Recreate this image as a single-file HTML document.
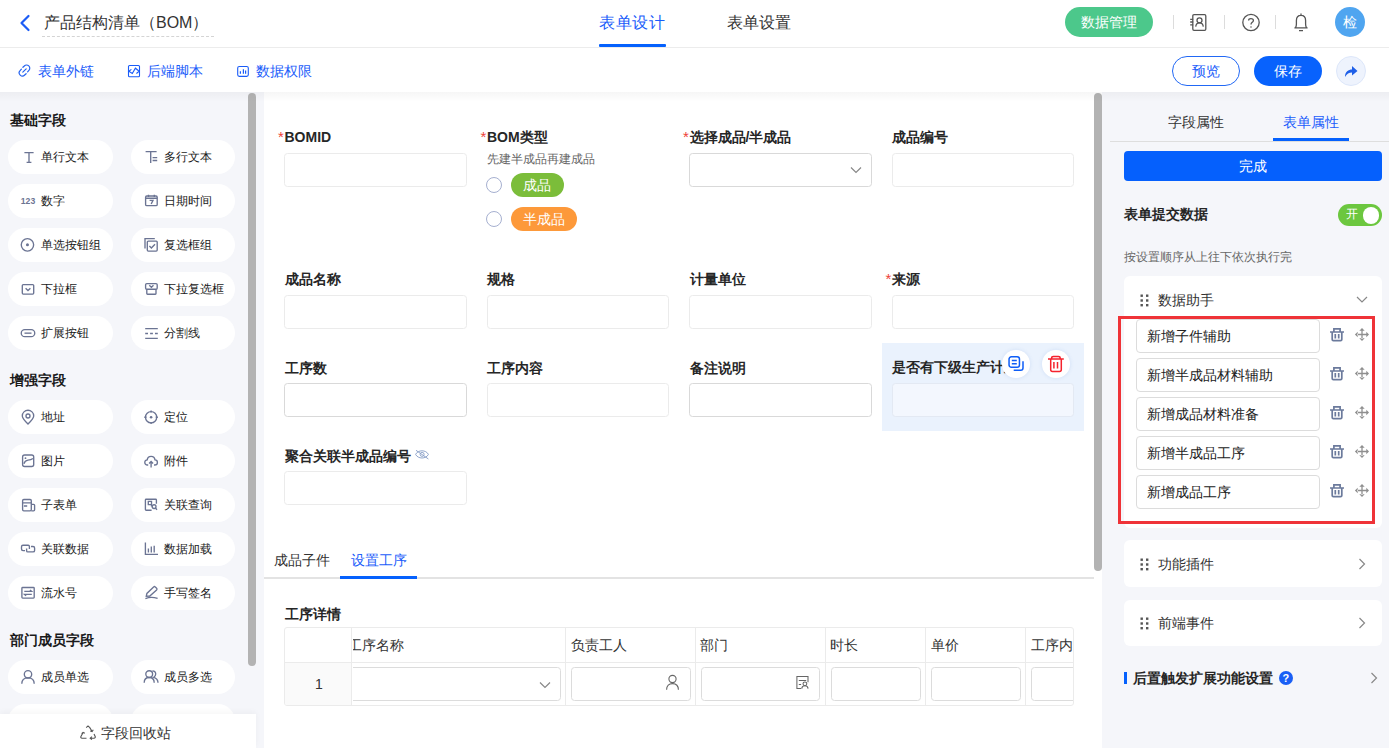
<!DOCTYPE html>
<html><head><meta charset="utf-8">
<style>
*{box-sizing:border-box;margin:0;padding:0}
html,body{width:1389px;height:748px;overflow:hidden;background:#f5f6fa;font-family:"Liberation Sans",sans-serif;color:#333}
.a{position:absolute}
.t{position:absolute;white-space:nowrap;line-height:1}
.f14{font-size:14px}.f12{font-size:12px}.f16{font-size:16px}
.b{font-weight:bold}
.blue{color:#1a5cfa}
#hdr{position:absolute;left:0;top:0;width:1389px;height:48px;background:#fff;border-bottom:1px solid #ececec}
#tb{position:absolute;left:0;top:48px;width:1389px;height:44px;background:#fff}
#lp{position:absolute;left:0;top:92px;width:256px;height:656px;background:#f5f6fa}
.pill{position:absolute;height:34px;background:#fff;border-radius:17px}
.pill.c1{left:8px;width:104.6px}.pill.c2{left:131px;width:104.4px}

.pill span{position:absolute;left:33px;top:11px;font-size:12px;line-height:12px;white-space:nowrap;color:#1a1a1a}
.pill.c2 span{left:33px}
#cv{position:absolute;left:264px;top:92px;width:838px;height:656px;background:#fff}
.sb{position:absolute;width:8px;background:#b3b3b3;border-radius:4px}
.lbl{position:absolute;font-size:14px;line-height:14px;font-weight:bold;color:#262626;white-space:nowrap}
.req{position:absolute;color:#ee4036;font-size:15px;line-height:15px;font-weight:normal}
.inp{position:absolute;height:34px;border:1px solid #ebebeb;border-radius:3.5px;background:#fff}
.inp.d{border-color:#d9d9d9}
#rp{position:absolute;left:1102px;top:92px;width:287px;height:656px;background:#f5f6fa}
.card{position:absolute;left:1124px;width:258px;background:#fff;border-radius:6px}
.rin{position:absolute;left:1136px;width:184px;height:34px;border:1px solid #dcdcdc;border-radius:4px;background:#fff}
.rin span{position:absolute;left:10px;top:9px;font-size:14px;line-height:14px;color:#222;white-space:nowrap}
</style></head><body>

<!-- HEADER -->
<div id="hdr"></div>
<svg class="a" style="left:18px;top:14px" width="14" height="18" viewBox="0 0 14 18"><path d="M10.5 2 L3.5 9 L10.5 16" fill="none" stroke="#1c5cf5" stroke-width="2.2" stroke-linecap="round" stroke-linejoin="round"/></svg>
<div class="t f16" style="left:44px;top:15px;color:#333">产品结构清单（BOM）</div>
<div class="a" style="left:42px;top:36px;width:172px;height:0;border-top:1px dashed #d4d4d4"></div>
<div class="t f16 blue" style="left:599px;top:15px;letter-spacing:0.6px">表单设计</div>
<div class="a" style="left:599px;top:44px;width:67px;height:3px;background:#0561fd;border-radius:1px"></div>
<div class="t f16" style="left:726.5px;top:15px;color:#333;letter-spacing:0.3px">表单设置</div>

<div class="a" style="left:1065px;top:7px;width:88px;height:30px;background:#4cc88b;border-radius:15px"></div>
<div class="t f14" style="left:1081px;top:14.5px;color:#fff">数据管理</div>
<div class="a" style="left:1173px;top:15px;width:1px;height:14px;background:#dcdcdc"></div>
<div class="a" style="left:1224px;top:15px;width:1px;height:14px;background:#dcdcdc"></div>
<div class="a" style="left:1275px;top:15px;width:1px;height:14px;background:#dcdcdc"></div>
<!-- contacts icon -->
<svg class="a" style="left:1189px;top:13px" width="19" height="19" viewBox="0 0 19 19" fill="none" stroke="#555" stroke-width="1.3"><rect x="3.8" y="1.7" width="13" height="15.6" rx="1.2"/><circle cx="10.5" cy="7.3" r="2.5"/><path d="M6.7 13.6 C7 11.2 8.4 9.9 10.5 9.9 C12.6 9.9 14 11.2 14.3 13.6"/><path d="M1.2 6.3h3M1.2 9h3M1.2 11.8h3"/></svg>
<!-- help icon -->
<svg class="a" style="left:1241px;top:13px" width="20" height="20" viewBox="0 0 20 20" fill="none" stroke="#555" stroke-width="1.3"><circle cx="10" cy="9.5" r="8.2"/><path d="M7.6 7.4 C7.6 5 12.4 5 12.4 7.4 C12.4 9.2 10 9.4 10 11.4"/><circle cx="10" cy="13.9" r="0.75" fill="#555" stroke="none"/></svg>
<!-- bell -->
<svg class="a" style="left:1292px;top:12px" width="18" height="20" viewBox="0 0 18 20" fill="none" stroke="#555" stroke-width="1.3"><path d="M9 1.6 V3.4 M3.6 15.6 C4.2 14.6 4.4 13.6 4.4 12 V8.6 C4.4 5.4 6.4 3.4 9 3.4 C11.6 3.4 13.6 5.4 13.6 8.6 V12 C13.6 13.6 13.8 14.6 14.4 15.6 M2.4 15.8 H15.6 M7 18.6 H11"/></svg>
<div class="a" style="left:1335px;top:7px;width:30px;height:30px;background:#4fa5f0;border-radius:50%"></div>
<div class="t f14" style="left:1343px;top:15px;color:#fff">检</div>

<!-- TOOLBAR -->
<div id="tb"></div>
<svg class="a" style="left:18px;top:64px" width="13" height="13" viewBox="0 0 13 13" fill="none" stroke="#2563f0" stroke-width="1.2" stroke-linecap="round"><path d="M4.9 3.3 L6.3 2 A3.1 3.1 0 0 1 10.9 6.4 L9.6 7.8"/><path d="M8.1 9.7 L6.7 11 A3.1 3.1 0 0 1 2.1 6.6 L3.4 5.2"/><path d="M4.8 8.2 L8.2 4.8"/></svg>
<div class="t f14 blue" style="left:38px;top:64px">表单外链</div>
<svg class="a" style="left:127px;top:64px" width="14" height="14" viewBox="0 0 14 14" fill="none" stroke="#1a5cf8" stroke-width="1.1"><rect x="1.5" y="1.5" width="11" height="11.3" rx="1"/><path d="M4.4 5.4 L1.8 7.3 L5.3 9.5 L8.4 4.2 L12.2 7.3 L9.4 9.5"/></svg>
<div class="t f14 blue" style="left:147px;top:64px">后端脚本</div>
<svg class="a" style="left:236px;top:64px" width="14" height="14" viewBox="0 0 14 14" fill="none" stroke="#1a5cf8" stroke-width="1.1"><rect x="1.7" y="2.5" width="10.6" height="9.9" rx="1.6"/><path d="M4.4 7.3 V9.7 M7.4 5.2 V9.7 M9.6 6.5 V9.7" stroke-width="1.2"/></svg>
<div class="t f14 blue" style="left:256px;top:64px">数据权限</div>

<div class="a" style="left:1172px;top:56px;width:68px;height:30px;border:1px solid #2168f5;border-radius:15px;background:#fff"></div>
<div class="t f14 blue" style="left:1192px;top:64px">预览</div>
<div class="a" style="left:1254px;top:56px;width:68px;height:30px;background:#0862fd;border-radius:15px"></div>
<div class="t f14" style="left:1274px;top:64px;color:#fff">保存</div>
<div class="a" style="left:1336px;top:56px;width:30px;height:30px;background:#eef3fd;border:1px solid #dde7fa;border-radius:50%"></div>
<svg class="a" style="left:1343px;top:63px" width="16" height="16" viewBox="0 0 16 16"><path d="M2 14 C2 8.5 5.5 6.5 9 6.5 V3 L14.5 8 L9 12.5 V9.5 C6 9.5 3.8 10.8 2 14 Z" fill="#1e5fe8"/></svg>

<!-- LEFT PANEL -->
<div id="lp"></div>
<div class="t f14 b" style="left:10px;top:113px;color:#1a1a1a">基础字段</div>
<div class="t f14 b" style="left:10px;top:373px;color:#1a1a1a">增强字段</div>
<div class="t f14 b" style="left:10px;top:633px;color:#1a1a1a">部门成员字段</div>

<div class="pill c1" style="top:140px"><svg width="16" height="16" viewBox="0 0 16 16" fill="none" stroke="#6b7493" stroke-width="1.35" style="position:absolute;left:12px;top:9px"><path d="M4.4 3.6 H13.6 M9 3.6 V13.4 M6.6 13.4 H11.4"/></svg><span>单行文本</span></div>
<div class="pill c2" style="top:140px"><svg width="16" height="16" viewBox="0 0 16 16" fill="none" stroke="#6b7493" stroke-width="1.35" style="position:absolute;left:12px;top:9px"><path d="M2.6 2.6 H13.6 M7.7 2.6 V14 M9.6 8.6 H14.2 M9.6 11.5 H14.2"/></svg><span>多行文本</span></div>
<div class="pill c1" style="top:184px"><svg width="16" height="16" viewBox="0 0 16 16" fill="none" stroke="#6b7493" stroke-width="1.35" style="position:absolute;left:12px;top:9px"><text x="0.8" y="11.3" style="font-family:'Liberation Sans',sans-serif;font-size:9.6px;font-weight:bold" fill="#6b7493" stroke="none" textLength="14.4" lengthAdjust="spacingAndGlyphs">123</text></svg><span>数字</span></div>
<div class="pill c2" style="top:184px"><svg width="16" height="16" viewBox="0 0 16 16" fill="none" stroke="#6b7493" stroke-width="1.35" style="position:absolute;left:12px;top:9px"><rect x="2.6" y="3" width="11.6" height="9.6" rx="1.2"/><path d="M5.5 1.8 V4 M11.3 1.8 V4 M2.6 5.2 H14.2 M6.6 7.3 H10 L8.2 11"/></svg><span>日期时间</span></div>
<div class="pill c1" style="top:228px"><svg width="16" height="16" viewBox="0 0 16 16" fill="none" stroke="#6b7493" stroke-width="1.35" style="position:absolute;left:12px;top:9px"><circle cx="7.45" cy="7.85" r="6.2"/><circle cx="7.45" cy="7.85" r="1.5" fill="#6b7493" stroke="none"/></svg><span>单选按钮组</span></div>
<div class="pill c2" style="top:228px"><svg width="16" height="16" viewBox="0 0 16 16" fill="none" stroke="#6b7493" stroke-width="1.35" style="position:absolute;left:12px;top:9px"><path d="M2 11.5 V1.6 H11.8"/><rect x="4.3" y="4.1" width="9.9" height="10" rx="1"/><path d="M6.4 9 L8.4 11 L12 7.2"/></svg><span>复选框组</span></div>
<div class="pill c1" style="top:272px"><svg width="16" height="16" viewBox="0 0 16 16" fill="none" stroke="#6b7493" stroke-width="1.35" style="position:absolute;left:12px;top:9px"><rect x="2.3" y="3.6" width="11.4" height="9.5" rx="1"/><path d="M5.6 7.3 L8 9.6 L10.4 7.3"/></svg><span>下拉框</span></div>
<div class="pill c2" style="top:272px"><svg width="16" height="16" viewBox="0 0 16 16" fill="none" stroke="#6b7493" stroke-width="1.35" style="position:absolute;left:12px;top:9px"><rect x="2.6" y="2.6" width="11.6" height="5.6" rx="1.2"/><path d="M3.8 8.2 V12.5 C3.8 13 4.1 13.2 4.5 13.2 H12.3 C12.7 13.2 13 13 13 12.5 V8.2 M6.3 4.2 L8.4 6.2 L10.5 4.2"/></svg><span>下拉复选框</span></div>
<div class="pill c1" style="top:316px"><svg width="16" height="16" viewBox="0 0 16 16" fill="none" stroke="#6b7493" stroke-width="1.35" style="position:absolute;left:12px;top:9px"><rect x="1.25" y="4.65" width="13.5" height="7" rx="3.5"/><path d="M4.5 8.15 H11.5"/></svg><span>扩展按钮</span></div>
<div class="pill c2" style="top:316px"><svg width="16" height="16" viewBox="0 0 16 16" fill="none" stroke="#6b7493" stroke-width="1.35" style="position:absolute;left:12px;top:9px"><path d="M2.2 3.6 H14.8 M2.2 13.4 H14.8 M2.2 8.5 H5 M7.1 8.5 H9.9 M12 8.5 H14.8"/></svg><span>分割线</span></div>

<div class="pill c1" style="top:400px"><svg width="16" height="16" viewBox="0 0 16 16" fill="none" stroke="#6b7493" stroke-width="1.35" style="position:absolute;left:12px;top:9px"><path d="M8 15 C4.5 11.5 2.3 9 2.3 6.9 A5.7 5.7 0 0 1 13.7 6.9 C13.7 9 11.5 11.5 8 15 Z"/><circle cx="8" cy="7" r="2"/></svg><span>地址</span></div>
<div class="pill c2" style="top:400px"><svg width="16" height="16" viewBox="0 0 16 16" fill="none" stroke="#6b7493" stroke-width="1.35" style="position:absolute;left:12px;top:9px"><circle cx="8.1" cy="8.25" r="5.6"/><circle cx="8.1" cy="8.25" r="1.3" fill="#6b7493" stroke="none"/><path d="M8.1 1.4 V3.6 M8.1 12.9 V15.1 M1.3 8.25 H3.5 M12.7 8.25 H14.9"/></svg><span>定位</span></div>
<div class="pill c1" style="top:444px"><svg width="16" height="16" viewBox="0 0 16 16" fill="none" stroke="#6b7493" stroke-width="1.35" style="position:absolute;left:12px;top:9px"><rect x="2.6" y="2" width="11.1" height="11.5" rx="2"/><path d="M3.9 10.8 C4.6 8.2 6 7.3 8 7.1 C10 6.9 11.5 6.5 12.9 5.5"/><circle cx="5.5" cy="5.2" r="0.9" fill="#6b7493" stroke="none"/></svg><span>图片</span></div>
<div class="pill c2" style="top:444px"><svg width="16" height="16" viewBox="0 0 16 16" fill="none" stroke="#6b7493" stroke-width="1.35" style="position:absolute;left:12px;top:9px"><path d="M5.2 12 H4.5 C2.8 12 1.8 10.8 1.8 9.4 C1.8 7.9 3 6.9 4.2 6.9 C4.5 4.6 6.2 3.3 8.1 3.3 C10.1 3.3 11.7 4.6 12 6.9 C13.3 6.9 14.4 7.9 14.4 9.4 C14.4 10.8 13.4 12 11.7 12 H11 M8.1 14.6 V8.6 M6.1 10.4 L8.1 8.4 L10.1 10.4"/></svg><span>附件</span></div>
<div class="pill c1" style="top:488px"><svg width="16" height="16" viewBox="0 0 16 16" fill="none" stroke="#6b7493" stroke-width="1.35" style="position:absolute;left:12px;top:9px"><rect x="2.6" y="2.5" width="8.7" height="11.3" rx="1.2"/><path d="M2.6 5.8 H11.3 M3.9 9 H7.2 M11.3 7.3 H13.6 C14.2 7.3 14.6 7.7 14.6 8.3 V12.8 C14.6 13.4 14.2 13.8 13.6 13.8 H11.3"/></svg><span>子表单</span></div>
<div class="pill c2" style="top:488px"><svg width="16" height="16" viewBox="0 0 16 16" fill="none" stroke="#6b7493" stroke-width="1.35" style="position:absolute;left:12px;top:9px"><path d="M13.4 6.8 V3 C13.4 2.5 13.1 2.2 12.6 2.2 H3.2 C2.7 2.2 2.4 2.5 2.4 3 V12.4 C2.4 12.9 2.7 13.2 3.2 13.2 H8.6 M5.3 4.4 H8.5 V7.6 H5.3 Z M8.5 7.6 V9.5"/><circle cx="11.1" cy="9.6" r="1.9"/><path d="M12.4 11 L14 12.7"/></svg><span>关联查询</span></div>
<div class="pill c1" style="top:532px"><svg width="16" height="16" viewBox="0 0 16 16" fill="none" stroke="#6b7493" stroke-width="1.35" style="position:absolute;left:12px;top:9px"><path d="M11 5.5 H13 C14 5.5 14.6 6 14.6 7 V9.4 C14.6 10.4 14 10.9 13 10.9 H7.8 C7 10.9 6.6 10.5 6.6 9.7 V7.4 M5 9.6 H3 C2 9.6 1.5 9.1 1.5 8.1 V5.7 C1.5 4.7 2 4.2 3 4.2 H8.2 C9 4.2 9.4 4.6 9.4 5.4 V8"/></svg><span>关联数据</span></div>
<div class="pill c2" style="top:532px"><svg width="16" height="16" viewBox="0 0 16 16" fill="none" stroke="#6b7493" stroke-width="1.35" style="position:absolute;left:12px;top:9px"><path d="M2.4 1.6 V13.4 H15 M5.4 7.6 V11.4 M8.3 5.4 V11.4 M11.2 4.8 V11.4"/></svg><span>数据加载</span></div>
<div class="pill c1" style="top:576px"><svg width="16" height="16" viewBox="0 0 16 16" fill="none" stroke="#6b7493" stroke-width="1.35" style="position:absolute;left:12px;top:9px"><rect x="1.9" y="2.5" width="12.3" height="10.6" rx="0.8"/><path d="M4.3 6.4 H11.6 L10 5 M11.8 9.3 H4.5 L6.1 10.7"/></svg><span>流水号</span></div>
<div class="pill c2" style="top:576px"><svg width="16" height="16" viewBox="0 0 16 16" fill="none" stroke="#6b7493" stroke-width="1.35" style="position:absolute;left:12px;top:9px"><path d="M3.3 11.2 L3.9 8.4 L10.6 2 C11.1 1.5 11.8 1.5 12.3 2 L13.6 3.2 C14.1 3.7 14.1 4.4 13.6 4.9 L6.8 11 Z M2.4 13.6 C6 12.1 10.5 12.1 14.6 13.4"/></svg><span>手写签名</span></div>

<div class="pill c1" style="top:660px"><svg width="16" height="16" viewBox="0 0 16 16" fill="none" stroke="#6b7493" stroke-width="1.35" style="position:absolute;left:12px;top:9px"><circle cx="8" cy="5.3" r="3.7"/><path d="M1.8 14.7 C1.8 10.8 4.5 8.8 8 8.8 C11.5 8.8 14.2 10.8 14.2 14.7"/></svg><span>成员单选</span></div>
<div class="pill c2" style="top:660px"><svg width="16" height="16" viewBox="0 0 16 16" fill="none" stroke="#6b7493" stroke-width="1.35" style="position:absolute;left:12px;top:9px"><circle cx="6.2" cy="5.1" r="3.4"/><path d="M1.2 13.8 C1.2 10.4 3.3 8.5 6.2 8.5 C9.1 8.5 11.2 10.4 11.2 13.8 M9.4 1.8 C11.3 1.9 12.7 3.3 12.7 5.1 C12.7 6.5 11.9 7.6 10.8 8.3 C13.2 9 15 10.9 15 13.8"/></svg><span>成员多选</span></div>
<div class="pill c1" style="top:704px"></div>
<div class="pill c2" style="top:704px"></div>

<div class="a" style="left:0;top:714px;width:256px;height:34px;background:#fff;box-shadow:0 -2px 6px rgba(0,0,0,0.04)"></div>
<svg class="a" style="left:80px;top:725px" width="16" height="15" viewBox="0 0 16 15" fill="none" stroke="#555" stroke-width="1.1"><path d="M6.2 2.6 L8 0.9 L9.8 2.6 L12 6.3 M13.3 4.8 L12.1 6.5 L10.2 6 M14 9 L15.2 11.5 C15.5 12.3 15 13.2 14 13.2 H10.5 M11.9 11.6 L10.2 13.2 L11.9 14.6 M6.5 13.2 H2 C1 13.2 0.5 12.3 0.9 11.5 L3 7.8 M1.6 8.7 L3.1 7.4 L4.8 8.2"/></svg>
<div class="t f14" style="left:101px;top:726px;color:#333">字段回收站</div>
<div class="sb" style="left:248px;top:93px;height:573px"></div>

<!-- CANVAS -->
<div id="cv"></div>

<!-- FORM row1 -->
<div class="req" style="left:278px;top:128.5px">*</div>
<div class="lbl" style="left:284.5px;top:130px">BOMID</div>
<div class="inp" style="left:284px;top:153px;width:183px"></div>
<div class="req" style="left:480.5px;top:128.5px">*</div>
<div class="lbl" style="left:487px;top:130px">BOM类型</div>
<div class="t f12" style="left:487px;top:152.5px;color:#666">先建半成品再建成品</div>
<div class="a" style="left:486px;top:177px;width:16px;height:16px;border:1px solid #a6b0d0;border-radius:50%;background:#fff"></div>
<div class="a" style="left:511px;top:173px;width:53px;height:24px;background:#7bbd3a;border-radius:12px"></div>
<div class="t f14" style="left:523px;top:178px;color:#fff">成品</div>
<div class="a" style="left:486px;top:210.5px;width:16px;height:16px;border:1px solid #a6b0d0;border-radius:50%;background:#fff"></div>
<div class="a" style="left:511px;top:207px;width:66px;height:24px;background:#fd993a;border-radius:12px"></div>
<div class="t f14" style="left:523px;top:212px;color:#fff">半成品</div>
<div class="req" style="left:683px;top:128.5px">*</div>
<div class="lbl" style="left:689.5px;top:130px">选择成品/半成品</div>
<div class="inp d" style="left:689px;top:153px;width:183px"></div>
<svg class="a" style="left:850px;top:166px" width="12" height="8" viewBox="0 0 12 8"><path d="M1 1.5 L6 6.5 L11 1.5" fill="none" stroke="#888" stroke-width="1.2"/></svg>
<div class="lbl" style="left:892px;top:130px">成品编号</div>
<div class="inp" style="left:892px;top:153px;width:182px"></div>

<!-- row2 -->
<div class="lbl" style="left:284.5px;top:272px">成品名称</div>
<div class="inp" style="left:284px;top:295px;width:183px"></div>
<div class="lbl" style="left:487px;top:272px">规格</div>
<div class="inp" style="left:487px;top:295px;width:182px"></div>
<div class="lbl" style="left:689.5px;top:272px">计量单位</div>
<div class="inp" style="left:689px;top:295px;width:183px"></div>
<div class="req" style="left:885.5px;top:270.5px">*</div>
<div class="lbl" style="left:892px;top:272px">来源</div>
<div class="inp" style="left:892px;top:295px;width:182px"></div>

<!-- row3 -->
<div class="lbl" style="left:284.5px;top:361px">工序数</div>
<div class="inp d" style="left:284px;top:383px;width:183px"></div>
<div class="lbl" style="left:487px;top:361px">工序内容</div>
<div class="inp" style="left:487px;top:383px;width:182px"></div>
<div class="lbl" style="left:689.5px;top:361px">备注说明</div>
<div class="inp d" style="left:689px;top:383px;width:183px"></div>
<div class="a" style="left:882px;top:343px;width:202px;height:88px;background:#eaf2fd"></div>
<div class="lbl" style="left:892px;top:360px">是否有下级生产计划</div>
<div class="inp" style="left:892px;top:383px;width:182px;background:#f3f7fe;border-color:#e3e9f3"></div>
<div class="a" style="left:1002.3px;top:350.2px;width:27.6px;height:27.6px;background:#fff;border-radius:50%;box-shadow:0 0 4px rgba(30,90,200,0.12)"></div>
<svg class="a" style="left:1008px;top:355px" width="17" height="17" viewBox="0 0 17 17" fill="none" stroke="#0f5ef7" stroke-width="1.5"><rect x="1.05" y="1.75" width="10.4" height="10.5" rx="2.3"/><path d="M3.8 5.4 H8.8 M3.8 8.8 H8.8"/><path d="M15 6.2 V13 C15 14.5 14.2 15.3 12.7 15.3 H5.7"/></svg>
<div class="a" style="left:1042px;top:350.2px;width:27.6px;height:27.6px;background:#fff;border-radius:50%;box-shadow:0 0 4px rgba(30,90,200,0.12)"></div>
<svg class="a" style="left:1047px;top:355px" width="18" height="18" viewBox="0 0 18 18" fill="none" stroke="#f5222d" stroke-width="1.5"><path d="M1 4.1 H16.8 M4.6 4 V3.2 C4.6 1.9 5.2 1.5 6.4 1.5 H11.4 C12.6 1.5 13.2 1.9 13.2 3.2 V4 M3.7 4.6 V14.8 C3.7 16 4.2 16.5 5.5 16.5 H12.5 C13.8 16.5 14.3 16 14.3 14.8 V4.6 M6.9 7 V13.6 M10.5 7 V13.6"/></svg>

<!-- row4 -->
<div class="lbl" style="left:284.5px;top:448.5px">聚合关联半成品编号</div>
<svg class="a" style="left:414px;top:449px" width="16" height="12" viewBox="0 0 16 12" fill="none" stroke="#8aa0c8" stroke-width="0.95"><path d="M1.6 5.4 C4 0.6 12 0.6 14.4 5.4 C12 10.2 4 10.2 1.6 5.4 Z"/><circle cx="8.1" cy="5.4" r="2"/><path d="M2 1.3 L14.4 10"/></svg>
<div class="inp" style="left:284px;top:471px;width:183px"></div>

<!-- tabs -->
<div class="a" style="left:264px;top:577px;width:830px;height:2px;background:#e3e3e3"></div>
<div class="t f14" style="left:273.5px;top:553px;color:#333">成品子件</div>
<div class="t f14 blue" style="left:350.5px;top:553px">设置工序</div>
<div class="a" style="left:339.5px;top:576px;width:77px;height:3px;background:#0561fd"></div>

<!-- table -->
<div class="lbl" style="left:285px;top:607px">工序详情</div>
<div class="a" style="left:284px;top:627px;width:790px;height:78.5px;border:1px solid #ebebeb;border-radius:3px;overflow:hidden;background:#fff">
  <div class="a" style="left:0;top:33.5px;width:790px;height:1px;background:#ebebeb"></div>
  <div class="a" style="left:0;top:34.5px;width:66px;height:44px;background:#fafafa"></div>
  <div class="a" style="left:66px;top:0;width:1px;height:78px;background:#ebebeb"></div>
  <div class="t f14" style="left:30px;top:49px;color:#333">1</div>
  <div class="a" style="left:67.5px;top:0;width:720.5px;height:78px;overflow:hidden">
    <div class="t f14" style="left:-5px;top:10px;color:#333">工序名称</div>
    <div class="inp" style="left:-10px;top:38.5px;width:218px;height:34px;border-color:#dcdcdc"></div>
    <svg class="a" style="left:186px;top:53px" width="12" height="8" viewBox="0 0 12 8"><path d="M1 1.5 L6 6.5 L11 1.5" fill="none" stroke="#888" stroke-width="1.2"/></svg>
    <div class="a" style="left:212.5px;top:0;width:1px;height:78px;background:#ebebeb"></div>
    <div class="t f14" style="left:218px;top:10px;color:#333">负责工人</div>
    <div class="inp" style="left:218.5px;top:38.5px;width:119.5px;height:34px;border-color:#dcdcdc"></div>
    <svg class="a" style="left:312.5px;top:45.5px" width="15" height="17" viewBox="0 0 15 17" fill="none" stroke="#666" stroke-width="1.1"><circle cx="7.5" cy="5" r="3.6"/><path d="M1.6 15.8 C1.6 11.8 4 9.6 7.5 9.6 C11 9.6 13.4 11.8 13.4 15.8"/></svg>
    <div class="a" style="left:342.5px;top:0;width:1px;height:78px;background:#ebebeb"></div>
    <div class="t f14" style="left:347.5px;top:10px;color:#333">部门</div>
    <div class="inp" style="left:348.5px;top:38.5px;width:119px;height:34px;border-color:#dcdcdc"></div>
    <svg class="a" style="left:442.4px;top:47px" width="15" height="15" viewBox="0 0 15 15" fill="none" stroke="#666" stroke-width="1.05"><path d="M13 7.2 V1.4 H1.9 V13.5 H6.1 M3.8 5.4 H11.2 M3.8 9.4 H6.1"/><circle cx="9.9" cy="8.8" r="1.9"/><path d="M6.7 13.6 C7 11.6 8.2 10.8 9.9 10.8 C11.6 10.8 12.8 11.6 13.1 13.6"/></svg>
    <div class="a" style="left:472.5px;top:0;width:1px;height:78px;background:#ebebeb"></div>
    <div class="t f14" style="left:477.5px;top:10px;color:#333">时长</div>
    <div class="inp" style="left:478.5px;top:38.5px;width:89.5px;height:34px;border-color:#dcdcdc"></div>
    <div class="a" style="left:572.5px;top:0;width:1px;height:78px;background:#ebebeb"></div>
    <div class="t f14" style="left:578px;top:10px;color:#333">单价</div>
    <div class="inp" style="left:578.5px;top:38.5px;width:89.5px;height:34px;border-color:#dcdcdc"></div>
    <div class="a" style="left:672.5px;top:0;width:1px;height:78px;background:#ebebeb"></div>
    <div class="t f14" style="left:678px;top:10px;color:#333">工序内容</div>
    <div class="inp" style="left:678.5px;top:38.5px;width:90px;height:34px;border-color:#dcdcdc"></div>
  </div>
</div>
<div class="sb" style="left:1094px;top:93px;height:478px"></div>

<!-- RIGHT PANEL -->
<div id="rp"></div>
<div class="t f14" style="left:1167.5px;top:114.5px;color:#333">字段属性</div>
<div class="t f14 blue" style="left:1283px;top:114.5px">表单属性</div>
<div class="a" style="left:1110px;top:141px;width:279px;height:1px;background:#dedede"></div>
<div class="a" style="left:1273px;top:138px;width:76px;height:3px;background:#0561fd"></div>
<div class="a" style="left:1124px;top:151px;width:258px;height:30px;background:#0560fd;border-radius:4px"></div>
<div class="t f14" style="left:1239px;top:159px;color:#fff">完成</div>
<div class="t f14 b" style="left:1124px;top:207px;color:#262626">表单提交数据</div>
<div class="a" style="left:1338px;top:204px;width:44px;height:22px;background:#6cc73f;border-radius:11px"></div>
<div class="t f12" style="left:1346px;top:208px;color:#fff">开</div>
<div class="a" style="left:1362.5px;top:207px;width:16.5px;height:16.5px;background:#fff;border-radius:50%"></div>
<div class="t f12" style="left:1124px;top:251px;color:#666">按设置顺序从上往下依次执行完</div>

<div class="card" style="top:276px;height:252px"></div>
<svg class="a" style="left:1140px;top:293.5px" width="9" height="13" viewBox="0 0 9 13" fill="#555"><rect x="0.5" y="0.5" width="2.4" height="2.4"/><rect x="6" y="0.5" width="2.4" height="2.4"/><rect x="0.5" y="5.3" width="2.4" height="2.4"/><rect x="6" y="5.3" width="2.4" height="2.4"/><rect x="0.5" y="10" width="2.4" height="2.4"/><rect x="6" y="10" width="2.4" height="2.4"/></svg>
<div class="t f14" style="left:1158px;top:293px;color:#333">数据助手</div>
<svg class="a" style="left:1356px;top:295px" width="12" height="9" viewBox="0 0 12 9"><path d="M1 2 L6 7 L11 2" fill="none" stroke="#888" stroke-width="1.2"/></svg>
<div class="a" style="left:1118px;top:315.5px;width:257px;height:208.5px;border:3px solid #ef3338"></div>
<div class="rin" style="top:319px"><span>新增子件辅助</span></div>
<svg class="a" style="left:1329px;top:327.0px" width="16" height="16" viewBox="0 0 16 16" fill="none" stroke="#6b7a9c" stroke-width="1.7"><path d="M4.9 4.6 V1.9 H11.1 V4.6 M1 5 H15 M3.2 5.2 V12.6 C3.2 13.4 3.7 13.7 4.4 13.7 H11.6 C12.3 13.7 12.8 13.4 12.8 12.6 V5.2 M6.3 7 V11.6 M9.7 7 V11.6"/></svg>
<svg class="a" style="left:1354px;top:327.0px" width="16" height="16" viewBox="0 0 16 16" fill="#8f8f8f" stroke="none"><path d="M7.35 3 H8.65 V12 H7.35 Z M3 6.85 H13 V8.15 H3 Z M5.3 3.8 L8 0.9 L10.7 3.8 Z M5.3 11.2 L8 14.1 L10.7 11.2 Z M3.7 4.8 L0.9 7.5 L3.7 10.2 Z M12.3 4.8 L15 7.5 L12.3 10.2 Z"/></svg>
<div class="rin" style="top:358px"><span>新增半成品材料辅助</span></div>
<svg class="a" style="left:1329px;top:366.0px" width="16" height="16" viewBox="0 0 16 16" fill="none" stroke="#6b7a9c" stroke-width="1.7"><path d="M4.9 4.6 V1.9 H11.1 V4.6 M1 5 H15 M3.2 5.2 V12.6 C3.2 13.4 3.7 13.7 4.4 13.7 H11.6 C12.3 13.7 12.8 13.4 12.8 12.6 V5.2 M6.3 7 V11.6 M9.7 7 V11.6"/></svg>
<svg class="a" style="left:1354px;top:366.0px" width="16" height="16" viewBox="0 0 16 16" fill="#8f8f8f" stroke="none"><path d="M7.35 3 H8.65 V12 H7.35 Z M3 6.85 H13 V8.15 H3 Z M5.3 3.8 L8 0.9 L10.7 3.8 Z M5.3 11.2 L8 14.1 L10.7 11.2 Z M3.7 4.8 L0.9 7.5 L3.7 10.2 Z M12.3 4.8 L15 7.5 L12.3 10.2 Z"/></svg>
<div class="rin" style="top:397px"><span>新增成品材料准备</span></div>
<svg class="a" style="left:1329px;top:405.0px" width="16" height="16" viewBox="0 0 16 16" fill="none" stroke="#6b7a9c" stroke-width="1.7"><path d="M4.9 4.6 V1.9 H11.1 V4.6 M1 5 H15 M3.2 5.2 V12.6 C3.2 13.4 3.7 13.7 4.4 13.7 H11.6 C12.3 13.7 12.8 13.4 12.8 12.6 V5.2 M6.3 7 V11.6 M9.7 7 V11.6"/></svg>
<svg class="a" style="left:1354px;top:405.0px" width="16" height="16" viewBox="0 0 16 16" fill="#8f8f8f" stroke="none"><path d="M7.35 3 H8.65 V12 H7.35 Z M3 6.85 H13 V8.15 H3 Z M5.3 3.8 L8 0.9 L10.7 3.8 Z M5.3 11.2 L8 14.1 L10.7 11.2 Z M3.7 4.8 L0.9 7.5 L3.7 10.2 Z M12.3 4.8 L15 7.5 L12.3 10.2 Z"/></svg>
<div class="rin" style="top:436px"><span>新增半成品工序</span></div>
<svg class="a" style="left:1329px;top:444.0px" width="16" height="16" viewBox="0 0 16 16" fill="none" stroke="#6b7a9c" stroke-width="1.7"><path d="M4.9 4.6 V1.9 H11.1 V4.6 M1 5 H15 M3.2 5.2 V12.6 C3.2 13.4 3.7 13.7 4.4 13.7 H11.6 C12.3 13.7 12.8 13.4 12.8 12.6 V5.2 M6.3 7 V11.6 M9.7 7 V11.6"/></svg>
<svg class="a" style="left:1354px;top:444.0px" width="16" height="16" viewBox="0 0 16 16" fill="#8f8f8f" stroke="none"><path d="M7.35 3 H8.65 V12 H7.35 Z M3 6.85 H13 V8.15 H3 Z M5.3 3.8 L8 0.9 L10.7 3.8 Z M5.3 11.2 L8 14.1 L10.7 11.2 Z M3.7 4.8 L0.9 7.5 L3.7 10.2 Z M12.3 4.8 L15 7.5 L12.3 10.2 Z"/></svg>
<div class="rin" style="top:475px"><span>新增成品工序</span></div>
<svg class="a" style="left:1329px;top:483.0px" width="16" height="16" viewBox="0 0 16 16" fill="none" stroke="#6b7a9c" stroke-width="1.7"><path d="M4.9 4.6 V1.9 H11.1 V4.6 M1 5 H15 M3.2 5.2 V12.6 C3.2 13.4 3.7 13.7 4.4 13.7 H11.6 C12.3 13.7 12.8 13.4 12.8 12.6 V5.2 M6.3 7 V11.6 M9.7 7 V11.6"/></svg>
<svg class="a" style="left:1354px;top:483.0px" width="16" height="16" viewBox="0 0 16 16" fill="#8f8f8f" stroke="none"><path d="M7.35 3 H8.65 V12 H7.35 Z M3 6.85 H13 V8.15 H3 Z M5.3 3.8 L8 0.9 L10.7 3.8 Z M5.3 11.2 L8 14.1 L10.7 11.2 Z M3.7 4.8 L0.9 7.5 L3.7 10.2 Z M12.3 4.8 L15 7.5 L12.3 10.2 Z"/></svg>

<div class="card" style="top:540px;height:46.5px"></div>
<svg class="a" style="left:1140px;top:557.5px" width="9" height="13" viewBox="0 0 9 13" fill="#555"><rect x="0.5" y="0.5" width="2.4" height="2.4"/><rect x="6" y="0.5" width="2.4" height="2.4"/><rect x="0.5" y="5.3" width="2.4" height="2.4"/><rect x="6" y="5.3" width="2.4" height="2.4"/><rect x="0.5" y="10" width="2.4" height="2.4"/><rect x="6" y="10" width="2.4" height="2.4"/></svg>
<div class="t f14" style="left:1158px;top:556.5px;color:#333">功能插件</div>
<svg class="a" style="left:1358px;top:558px" width="8" height="12" viewBox="0 0 8 12"><path d="M1.5 1 L6.5 6 L1.5 11" fill="none" stroke="#888" stroke-width="1.2"/></svg>
<div class="card" style="top:599.5px;height:46px"></div>
<svg class="a" style="left:1140px;top:616.5px" width="9" height="13" viewBox="0 0 9 13" fill="#555"><rect x="0.5" y="0.5" width="2.4" height="2.4"/><rect x="6" y="0.5" width="2.4" height="2.4"/><rect x="0.5" y="5.3" width="2.4" height="2.4"/><rect x="6" y="5.3" width="2.4" height="2.4"/><rect x="0.5" y="10" width="2.4" height="2.4"/><rect x="6" y="10" width="2.4" height="2.4"/></svg>
<div class="t f14" style="left:1158px;top:615.5px;color:#333">前端事件</div>
<svg class="a" style="left:1358px;top:617px" width="8" height="12" viewBox="0 0 8 12"><path d="M1.5 1 L6.5 6 L1.5 11" fill="none" stroke="#888" stroke-width="1.2"/></svg>
<div class="a" style="left:1124px;top:672px;width:3px;height:12px;background:#0561fd"></div>
<div class="t f14 b" style="left:1133px;top:671px;color:#262626">后置触发扩展功能设置</div>
<div class="a" style="left:1279px;top:671px;width:14px;height:14px;background:#1a5ff5;border-radius:50%"></div>
<div class="t" style="left:1282.5px;top:672.5px;font-size:11px;color:#fff;font-weight:bold">?</div>
<svg class="a" style="left:1370px;top:672px" width="8" height="12" viewBox="0 0 8 12"><path d="M1.5 1 L6.5 6 L1.5 11" fill="none" stroke="#888" stroke-width="1.2"/></svg>


<div class="a" style="left:0;top:92px;width:1389px;height:10px;background:linear-gradient(rgba(0,0,0,0.035),rgba(0,0,0,0));pointer-events:none"></div>
</body></html>
